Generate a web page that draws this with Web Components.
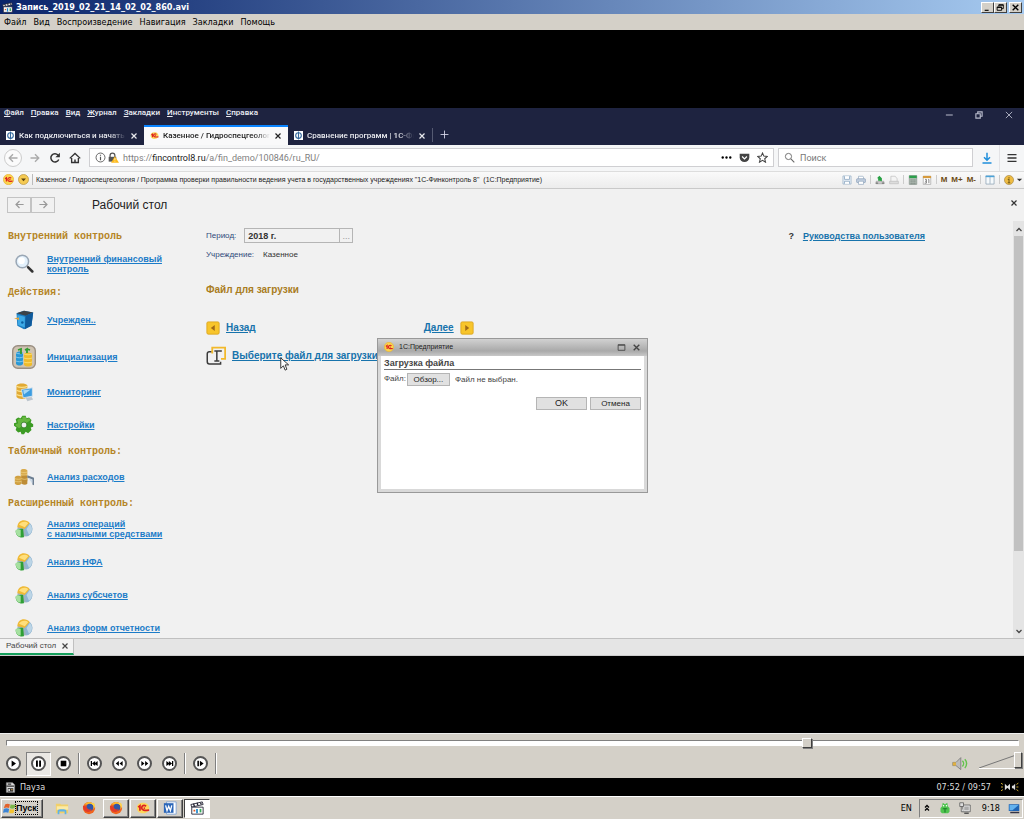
<!DOCTYPE html>
<html lang="ru">
<head>
<meta charset="utf-8">
<title>Запись_2019_02_21_14_02_02_860.avi</title>
<style>
html,body{margin:0;background:#000}
body{font-family:"DejaVu Sans Condensed","DejaVu Sans",sans-serif;font-size:9px;line-height:12px}
</style>
</head>
<body>
<player-window></player-window>
<script>
const ICONS = {
film:`<path d="M1 4 14 1l1 3L2 7z" fill="#fff" stroke="#223"/><path d="M4 3l1 3M8 2l1 3M12 2l1 2" stroke="#223" stroke-width="1.5"/><path d="M2 7h13v8H2z" fill="#fff" stroke="#223"/><path d="M4 10h2v2H4z" fill="#d52"/><path d="M7 9h2v5H7z" fill="#28c"/><path d="M11 9h2v4h-2z" fill="#3a5"/>`,
filmdoc:`<path d="M2 1h9l3 3v11H2z" fill="#ddd" stroke="#888"/><path d="M2 6h11M4 3h5" stroke="#333" stroke-width="2"/><path d="M4 9h8v5H4z" fill="#333"/><path d="M5 10h2v3H5z" fill="#fff"/><path d="M9 10h2v2H9z" fill="#c94"/>`,
min:`<path d="M3 12h7v2H3z"/>`,
restore:`<path d="M5 3h8v7h-3M5 3v3M5 4h8" fill="none" stroke="#000" stroke-width="1.6"/><path d="M2 7h8v6H2zM2 8h8" fill="none" stroke="#000" stroke-width="1.6"/>`,
x:`<path d="M3 3l10 10M13 3L3 13" fill="none" stroke="currentColor" stroke-width="2.4"/>`,
xthin:`<path d="M3 3l10 10M13 3L3 13" fill="none" stroke="currentColor" stroke-width="1.4"/>`,
line:`<path d="M3 8h11" stroke="currentColor" stroke-width="1.6"/>`,
wrest:`<path d="M3 6h7v7H3zM6 6V3h7v7h-3" fill="none" stroke="currentColor" stroke-width="1.8"/>`,
max:`<path d="M2 3h12v10H2zM2 4h12" fill="none" stroke="currentColor" stroke-width="1.5"/>`,
fi:`<path d="M0 0h16v16H0z" fill="#fff"/><circle cx="8" cy="8" r="5" fill="none" stroke="#34699e" stroke-width="2"/><path d="M8 1v14" stroke="#34699e" stroke-width="2"/>`,
onec:`<circle cx="8" cy="8" r="7.5" fill="#fbd44c" stroke="#e9b23a"/><path d="M3 7l2-1.500V11M12 6C10 4.500 7 5.500 7 8s2 3 7 2.500" fill="none" stroke="#d22" stroke-width="1.800"/><circle cx="10" cy="8" r="1" fill="#d22"/>`,
oneflat:`<path d="M1 8C1 3 5 2 8 2s6 1 7 5-3 7-7 7-7-2-7-6z" fill="#fcd75a"/><path d="M2.500 7l2-1.500V11M11.500 6C9 4 6.500 5.500 6.500 8s3 3 8.500 2.500" fill="none" stroke="#d22" stroke-width="2"/><circle cx="9.500" cy="8" r="1" fill="#d22"/>`,
drop:`<circle cx="8" cy="8" r="7.300" fill="#f5ca52" stroke="#b8923a"/><path d="M4.500 6.500h7L8 10.500z" fill="#5a4310"/>`,
left:`<path d="M14 8H3M8 3L3 8l5 5" fill="none" stroke="currentColor" stroke-width="1.8"/>`,
right:`<path d="M2 8h11M8 3l5 5-5 5" fill="none" stroke="currentColor" stroke-width="1.8"/>`,
reload:`<path d="M13 10A5.500 5.500 0 1 1 12 4" fill="none" stroke="#333" stroke-width="2"/><path d="M14.500 1v6h-6z" fill="#333"/>`,
home:`<path d="M1 8.500L8 2l7 6.500M3.500 8v6h9V8" fill="none" stroke="#333" stroke-width="1.8"/><path d="M7 10h2v4H7z" fill="#333"/>`,
info:`<circle cx="8" cy="8" r="6.500" fill="none" stroke="#555" stroke-width="1.3"/><path d="M8 7v5M8 4v1.600" stroke="#555" stroke-width="1.700"/>`,
lock:`<path d="M3 8V5a3.500 3.500 0 0 1 7 0v3" fill="none" stroke="#555" stroke-width="1.800"/><path d="M1 7h11v7H1z" fill="#555"/><path d="M10 6l6 9.500H4.500z" fill="#fcba1c"/><path d="M10 9v3M10 13v1" stroke="#fff"/>`,
dots:`<circle cx="2.500" cy="8" r="1.700"/><circle cx="8" cy="8" r="1.700"/><circle cx="13.500" cy="8" r="1.700"/>`,
pocket:`<path d="M1 2.500h14V8a7 6.500 0 0 1-14 0z" fill="#444"/><path d="M4.500 6.500L8 10l3.500-3.500" fill="none" stroke="#fff" stroke-width="1.800"/>`,
star:`<path d="M8 1.500l2 4.500 5 .5-3.800 3.300 1.200 5L8 12l-4.400 2.800 1.200-5L1 6.500 6 6z" fill="none" stroke="#444" stroke-width="1.500"/>`,
search:`<circle cx="6.500" cy="6.500" r="4.500" fill="none" stroke="#666" stroke-width="1.300"/><path d="M10 10l5 5" stroke="#666" stroke-width="1.600"/>`,
download:`<path d="M8 1v9M4 7l4 4 4-4M2 14.500h12" fill="none" stroke="#1f8fdc" stroke-width="2"/>`,
burger:`<path d="M2 3.500h12M2 8h12M2 12.500h12" stroke="#333" stroke-width="1.800"/>`,
plus:`<path d="M8 1v14M1 8h14" stroke="#dde" stroke-width="1.500"/>`,
save:`<path d="M1.500 1.500h13v13h-13z" fill="#e8f0f7" stroke="#8ba6c0"/><path d="M4 2v5h8V2M4 14v-4h8v4" fill="#fff" stroke="#8ba6c0" stroke-width="1.300"/>`,
print:`<path d="M4 6V2h7l1 1v3" fill="#fff" stroke="#8aa0b8"/><rect x="1" y="6" width="14" height="6" rx="1" fill="#c2cfdf" stroke="#7c94b0"/><path d="M4 10h8v5H4z" fill="#fff" stroke="#8aa0b8"/>`,
getf:`<path d="M2 10h12v4H2z" fill="#ccc" stroke="#999"/><path d="M1 13h4M11 13h4" stroke="#777" stroke-width="2"/><path d="M11 10V5L7 1 3 5h2v4h3z" fill="#27a043"/>`,
putf:`<path d="M3 2h7l3 4v5H3z" fill="#f4f4f4" stroke="#b8b8b8"/><path d="M1 10h14v4H1z" fill="#ddd" stroke="#bbb"/>`,
calc:`<path d="M2 1h12v14H2z" fill="#b4bfb8" stroke="#7c8a80"/><path d="M2 1h12v4H2z" fill="#2c9f4b"/><path d="M4 8h8M4 11h8M4 14h8" stroke="#6b776f" stroke-dasharray="2 1" stroke-width="1.500"/>`,
cal:`<path d="M2 2h12v13H2z" fill="#fff" stroke="#999"/><path d="M1.500 1.500h13v3.500h-13z" fill="#d69a3d"/><path d="M5 7h2v3H5M7 10v3H4M10 7h1v6" fill="none" stroke="#666" stroke-width="1.300"/>`,
panes:`<path d="M1.500 1.500h13v13h-13zM8 2v12" fill="#f6fafc" stroke="#7b93a8"/><path d="M1 1h14v2.500H1z" fill="#4ba3d8"/>`,
infog:`<circle cx="8" cy="8" r="7.300" fill="#eebc43" stroke="#a48441"/><path d="M8 7v5.500M6 7h2.500M6 12.500h4M8 3.500v2" stroke="#6b5212" stroke-width="1.500"/>`,
caret:`<path d="M2 6h12l-6 6z" fill="#333"/>`,
mag:`<circle cx="10" cy="9" r="7.500" fill="#e3f1fc" stroke="#9aa7b5" stroke-width="1.800"/><circle cx="9" cy="8" r="4" fill="#fff"/><path d="M15.500 14l2 2" stroke="#999" stroke-width="2"/><path d="M17 16l5 5" stroke="#333" stroke-width="3" stroke-linecap="round"/>`,
box:`<path d="M3 4l9-3 11 2-2 16-9 4-8-4z" fill="#1c7dc2"/><path d="M3 4l9-3 11 2-9 4z" fill="#3b4248"/><path d="M14 7l9-4-2 16-8 4z" fill="#0f5a9c"/><path d="M4 6l9 2v13l-8-3z" fill="#3ca9e6"/><path d="M0 10l6-1v3z" fill="#e2a13a"/><circle cx="10" cy="15" r="1.500" fill="#0b5ea0"/>`,
init:`<rect x=".7" y=".7" width="22.600" height="22.600" rx="5" fill="#cfc3b2" stroke="#9a8f82" stroke-width="1.400"/><path d="M4 8c2-2 5-2 7 0v11c-2 2-5 2-7 0z" fill="#2b98d4"/><path d="M4 8c2 1 5 1 7 0M4 12c2 1 5 1 7 0M4 16c2 1 5 1 7 0" stroke="#a8def6" stroke-width=".7" fill="none"/><path d="M12 9c2-2 6-2 8 0v11c-2 2-6 2-8 0z" fill="#eebb2c"/><path d="M12 9c2 1 6 1 8 0M12 13c2 1 6 1 8 0M12 17c2 1 6 1 8 0" stroke="#fdeb8c" stroke-width=".7" fill="none"/><path d="M9 9V4L6 5M15 8V4l-2 1M15 4l3 1" fill="none" stroke="#329b30" stroke-width="1.800"/>`,
monit:`<path d="M3 4c2-3 11-3 13 0v14c-2 3-11 3-13 0z" fill="#e1aa34"/><path d="M3 5c3 2 10 2 13 0M3 10c3 2 10 2 13 0M3 15c3 2 10 2 13 0" fill="none" stroke="#fbe08a" stroke-width="1.500"/><path d="M9 9l13-2v10l-11 2z" fill="#3b9ce0" stroke="#d8e4ee"/><path d="M11 10l9-1-8 6z" fill="#a6d8f6"/><path d="M14 19l7-1 2 3-7 2z" fill="#bcc5ce"/>`,
gear:`<path d="M10 1h4l1 3 3-1 3 3-1 3 3 2v3l-3 1 1 3-4 4-3-2-2 3h-3l-1-3-3 1-3-3 1-3-3-2v-3l3-1-1-4 3-2 3 1z" fill="#3c9b24"/><path d="M10 2h4l1 3 3-1 2 2-14 10-4-3v-2l3-1-1-4 3-2 3 1z" fill="#70bd47" opacity=".8"/><circle cx="12" cy="12" r="3.500" fill="#efefef" stroke="#2b7a1b"/>`,
expen:`<path d="M8 4c1-2 6-2 8 0v13H8z" fill="#d9ab4d"/><path d="M1 12c2-2 6-2 8 0v8c-2 2-6 2-8 0z" fill="#d0a042"/><path d="M9 11c2-2 5-2 7 0v9c-2 2-5 1-7 0z" fill="#be8d36"/><path d="M8 6c3 1 5 1 8 0M8 9c3 1 5 1 8 0M1 14c3 1 6 1 8 0M1 17c3 1 6 1 8 0M9 14c3 1 5 1 7 0" stroke="#f0d488" stroke-width=".8" fill="none"/><path d="M16 10l8 3v9l-2-1v-6l-6-2z" fill="#6d7f92"/><path d="M17 13l5 2v5z" fill="#ccdae7"/>`,
pie:`<circle cx="13" cy="12" r="9" fill="#9fb3c2"/><path d="M13 12L4 10C4 1 14-1 19 5z" fill="#efb935"/><path d="M6 7c2-4 8-5 11-2l-4 5z" fill="#ffdf7c"/><path d="M13 12l6-7c5 4 4 14-4 16z" fill="#8fb6d3"/><path d="M19 6c4 4 3 10-1 13l-3-7z" fill="#bcd5e6"/><path d="M2 14c2-2 6-3 9-2l1 10c-6 1-10-2-10-8z" fill="#2f9f35"/><path d="M2 14c1-2 4-2 6-1v8c-4 0-6-3-6-7z" fill="#a5e0a0"/>`,
goleft:`<rect x="1" y="1" width="14" height="14" rx="1.500" fill="#f8c52b" stroke="#dca51e"/><path d="M10 4.500v7L5.500 8z" fill="#a06a18"/>`,
goright:`<rect x="1" y="1" width="14" height="14" rx="1.500" fill="#f8c52b" stroke="#dca51e"/><path d="M6 4.500v7L10.500 8z" fill="#a06a18"/>`,
choose:`<path d="M7 7H4c-2 0-2.500 1-2.500 2.500v9c0 2 1 3 2.500 3h13.500V19" fill="none" stroke="#3c3c3c" stroke-width="1.800"/><path d="M7.500 9V2H23v13.500h-5" fill="none" stroke="#f2b92b" stroke-width="2.200"/><path d="M10 6h9M13 6v12M10 18h6" fill="none" stroke="#3c3c3c" stroke-width="1.800"/>`,
play:`<path d="M9 7l7 5-7 5z"/>`, pause:`<path d="M8 7h3v10H8zM13 7h3v10h-3z"/>`, stop:`<path d="M7.500 7.500h9v9h-9z"/>`,
prev:`<path d="M6 8h2v8H6zM17 8v8l-4-3v3l-5-4 5-4v3z"/>`, rew:`<path d="M11 8v8l-5-4zM17 8v8l-5-4z"/>`,
ff:`<path d="M7 8v8l5-4zM13 8v8l5-4z"/>`, next:`<path d="M16 8h2v8h-2zM7 8v8l4-3v3l5-4-5-4v3z"/>`, step:`<path d="M7 7.500h2.500v9H7zM11 7.500v9l6-4.500z"/>`,
speaker:`<path d="M1 8h4l6-6v15l-6-5H1z" fill="#bbb" stroke="#777"/><path d="M1 8h4v4H1z" fill="#e0b040"/><path d="M13 6c2 2 2 5 0 7M16 4c3 3 3 8 0 11" fill="none" stroke="#62c34c" stroke-width="1.800"/>`,
ramp:`<path d="M1 17L41 3" fill="none" stroke="#777"/><path d="M1 17.500h40" stroke="#fff"/>`,
stereo:`<path d="M6 4l4 4 4-4v10l-4-4-4 4zM22 4v10l-3-3h-2V7h2z" fill="#ddd"/><path d="M0 3l3 2M0 9h3M0 15l3-2M27 3l-3 2M27 9h-3M27 15l-3-2" stroke="#d0ac30" stroke-width="1.500"/>`,
flag:`<path d="M3 3c2-1 4-1 6 0L8 8C6 7 4 7 1 8z" fill="#e2622b"/><path d="M10 3c2 1 4 1 7 0l-2 5c-2 1-4 1-6 0z" fill="#7ab648"/><path d="M1 9c2-1 5-1 7 0l-1 5c-2-1-4-1-7 0z" fill="#3c84d4"/><path d="M9 9c2 1 4 1 6 0l-1 5c-2 1-4 1-6 0z" fill="#f5c330"/>`,
folder:`<path d="M1 3h5l1 1h8v10H1z" fill="#f1d06a"/><path d="M2 6h13v4H2z" fill="#fbeaa6"/><path d="M3 15v-4c0-2 10-2 10 0v4h-2v-3H5v3z" fill="#5fb2e6"/>`,
fox:`<circle cx="8" cy="8" r="7" fill="#f0641e"/><path d="M2 4c1 0 3-3 7-3 4 1 6 4 6 7-1-2-3-4-5-4z" fill="#fdbb2d"/><circle cx="9" cy="7" r="4" fill="#3157a8"/><path d="M1 6c2-1 4 0 5 2s3 2 5 1c-1 4-6 5-9 1z" fill="#e23b2a"/><path d="M9 3c3 0 5 2 4 6 3-2 2-6 0-7z" fill="#fdd34c"/>`,
word:`<path d="M4 1h11v14H4z" fill="#fff" stroke="#7fa3d3"/><path d="M1 2.500h11v11H1z" fill="#2b66b8"/><path d="M3 5l1.600 6L6.500 6l2 5L10 5" fill="none" stroke="#fff" stroke-width="1.500"/>`,
chev:`<path d="M4 7l4-4 4 4M4 13l4-4 4 4" fill="none" stroke="#000" stroke-width="2.500"/>`,
bug:`<path d="M5 1l3 2 3-2 1 5 2 2v5l-2 2H4l-2-2V8l2-2z" fill="#4fc44f"/><circle cx="6" cy="5" r="1" fill="#fff"/><circle cx="10" cy="5" r="1" fill="#fff"/><path d="M5 9h6M8 8v6" stroke="#1f7f2a" stroke-width="1.500"/>`,
net:`<path d="M5 4h10v9H5z" fill="#e4e4e4" stroke="#555"/><path d="M7 6h6v5H7z" fill="#aaa"/><path d="M7 15h6" stroke="#555" stroke-width="2"/><path d="M1 1h5v5H1zM3 6v7h3" fill="#ddd" stroke="#555"/>`,
desk:`<path d="M1 3h14v9H1z" fill="#1f64b4"/><path d="M2 4h12L6 11H2z" fill="#63b2ee"/><path d="M3 14h12" stroke="#334" stroke-width="2"/>`,
up:`<path d="M3 10l5-5 5 5" fill="none" stroke="#444" stroke-width="2.500"/>`,
down:`<path d="M3 6l5 5 5-5" fill="none" stroke="#444" stroke-width="2.500"/>`,
cursor:`<path d="M2 1v12l3-3 2 5 2-1-2-5h4z" fill="#fff" stroke="#222"/>`
};
const BOX = {mag:24,box:24,init:24,monit:24,gear:24,expen:24,pie:24,choose:24,play:24,pause:24,stop:24,prev:24,rew:24,ff:24,next:24,step:24,speaker:20,flag:17};
const WIDE = {ramp:"0 0 42 18",stereo:"0 0 28 18"};

customElements.define("ui-icon", class extends HTMLElement {
  connectedCallback(){
    const n = this.getAttribute("name"), b = BOX[n] || 16;
    this.attachShadow({mode:"open"}).innerHTML =
      `<style>:host{display:block;flex:none;width:var(--s,11px);height:var(--s,11px)}svg{display:block;width:100%;height:100%}</style>
       <svg viewBox="${WIDE[n] || `0 0 ${b} ${b}`}" aria-hidden="true">${ICONS[n]}</svg>`;
  }
});

const RESET = `*{box-sizing:border-box}button,input{font:inherit;color:inherit;margin:0;padding:0;border:0;background:none;border-radius:0}a{color:inherit}`;
function define(name, css, html){
  customElements.define(name, class extends HTMLElement {
    connectedCallback(){
      if (this.shadowRoot) return;
      const body = typeof html === "function" ? html(this) : html;
      const t = document.createElement("template");
      t.innerHTML = `<style>${RESET}${css}</style>${body}`;
      this.attachShadow({mode:"open"}).append(t.content.cloneNode(true));
    }
  });
}

define("title-bar", `:host{display:flex;align-items:center;height:14px;padding:0 2px 0 2px;gap:3px;background:linear-gradient(90deg,#0a246a,#a6caf0);color:#fff;font-weight:bold;font-size:9px}
h1{font:inherit;margin:0;flex:1;white-space:nowrap}
.g{display:flex}button{width:13px;height:11px;background:#d4d0c8;color:#000;border:1px solid;border-color:#fff #404040 #404040 #fff;display:grid;place-items:center;--s:9px}button:last-child{margin-left:2px}`,
`<ui-icon name="film"></ui-icon><h1>Запись_2019_02_21_14_02_02_860.avi</h1>
<div class="g"><button aria-label="Свернуть"><ui-icon name="min"></ui-icon></button><button aria-label="Восстановить"><ui-icon name="restore"></ui-icon></button><button aria-label="Закрыть"><ui-icon name="x"></ui-icon></button></div>`);

define("player-menu", `:host{display:flex;align-items:center;height:16px;padding:0 4px;gap:7px;background:#d4d0c8;color:#000}`,
["Файл","Вид","Воспроизведение","Навигация","Закладки","Помощь"].map(t=>`<button>${t}</button>`).join(""));

define("browser-tab", `:host{display:flex;align-items:center;flex:0 1 144px;min-width:0;height:20px;padding:0 6px;gap:4px;color:#e8e9ee;--s:9px;border-top:2px solid transparent}
:host([active]){background:#f9f9fa;color:#222;border-top-color:#0a84ff}
.t{flex:1;min-width:0;overflow:hidden;white-space:nowrap;mask-image:linear-gradient(90deg,#000 85%,transparent)}
button{--s:8px}`,
h=>`<ui-icon name="${h.getAttribute("icon")}"></ui-icon><span class="t"><slot></slot></span><button aria-label="Закрыть вкладку"><ui-icon name="x"></ui-icon></button>`);

define("browser-chrome", `:host{display:block;background:#1e2340;color:#eceef4;font-family:Roboto,sans-serif;font-size:8px;font-weight:500}
.m{display:flex;align-items:center;height:17px;padding:0 10px 6px 4px;gap:7px}.m .sp{flex:1}
.m button::first-letter{text-decoration:underline}.w{display:flex;gap:20px;--s:10px;color:#b9bccb;padding-top:4px}
.tabs{display:flex;align-items:center}.new{width:24px;height:14px;border-left:1px solid #555a72;display:grid;place-items:center;--s:9px}
.nav{display:flex;align-items:center;height:26px;background:#f5f6f7;color:#333;padding:0 6px 0 4px;gap:8px;font-weight:400;font-size:9px}
.nav>button{display:grid;place-items:center;--s:12px}.nav .b{width:18px;height:18px;border:1px solid #ccc;border-radius:50%;color:#aaa;margin-right:-1px;background:#fbfbfb}.f{color:#aaa}
.u,.s{display:flex;align-items:center;height:19px;background:#fff;border:1px solid #cfcfd2;padding:0 5px}
.u{flex:673;min-width:0;gap:2px;--s:11px}.u .a{flex:1;margin-left:2px;white-space:nowrap;color:#808080}.u .a b{color:#222;font-weight:400}.u .e{display:flex;gap:7px}
.s{flex:183;min-width:0;gap:5px;margin-left:-4px}.s input{flex:1;min-width:0;outline:0}.s input::placeholder{color:#777;opacity:1}
.nav>.h{border-left:1px solid #e3e3e6;padding-left:6px;height:26px;margin-left:-2px}`,
`<div class="m">${["Файл","Правка","Вид","Журнал","Закладки","Инструменты","Справка"].map(t=>`<button>${t}</button>`).join("")}<span class="sp"></span>
<div class="w"><ui-icon name="line"></ui-icon><ui-icon name="wrest"></ui-icon><ui-icon name="xthin"></ui-icon></div></div>
<div class="tabs"><browser-tab icon="fi">Как подключиться и начать р</browser-tab><browser-tab icon="oneflat" active>Казенное / Гидроспецгеологи</browser-tab><browser-tab icon="fi">Сравнение программ | 1С-Фи</browser-tab><button class="new" aria-label="Новая вкладка"><ui-icon name="plus"></ui-icon></button></div>
<div class="nav"><button class="b" aria-label="Назад"><ui-icon name="left"></ui-icon></button><button class="f" aria-label="Вперёд"><ui-icon name="right"></ui-icon></button><button aria-label="Обновить"><ui-icon name="reload"></ui-icon></button><button aria-label="Домой"><ui-icon name="home"></ui-icon></button>
<div class="u"><ui-icon name="info"></ui-icon><ui-icon name="lock"></ui-icon><span class="a">https://<b>fincontrol8.ru</b>/a/fin_demo/100846/ru_RU/</span><span class="e"><ui-icon name="dots"></ui-icon><ui-icon name="pocket"></ui-icon><ui-icon name="star"></ui-icon></span></div>
<div class="s"><ui-icon name="search"></ui-icon><input aria-label="Поиск" placeholder="Поиск"></div>
<button aria-label="Загрузки"><ui-icon name="download"></ui-icon></button><button class="h" aria-label="Меню"><ui-icon name="burger"></ui-icon></button></div>`);

define("app-bar", `:host{display:flex;align-items:center;height:18px;padding:0 1px 0 3px;background:linear-gradient(#fafafa,#ececec);border-bottom:1px solid #c9c9c9;border-top:1px solid #ddd;color:#222;font:7px/12px "Liberation Sans",sans-serif;--s:11px}
.l{display:flex;gap:4px;padding-right:3px;border-right:1px solid #bbb;margin-right:3px}.c{flex:1;min-width:0;white-space:pre;overflow:hidden}
.r{display:flex;gap:4px;align-items:center;--s:10px}.r b{font-size:8px;color:#6b4a12}i{width:1px;height:9px;background:#ccc}.k{--s:7px;margin-left:-2px}`,
`<div class="l"><ui-icon name="onec"></ui-icon><ui-icon name="drop"></ui-icon></div><span class="c">Казенное / Гидроспецгеология / Программа проверки правильности ведения учета в государственных учреждениях "1С-Финконтроль 8"  (1С:Предприятие)</span>
<div class="r"><ui-icon name="save"></ui-icon><ui-icon name="print"></ui-icon><i></i><ui-icon name="getf"></ui-icon><ui-icon name="putf"></ui-icon><i></i><ui-icon name="calc"></ui-icon><ui-icon name="cal"></ui-icon><i></i><b>M</b><b>M+</b><b>M-</b><i></i><ui-icon name="panes"></ui-icon><i></i><ui-icon name="infog"></ui-icon><ui-icon class="k" name="caret"></ui-icon></div>`);

define("side-group", `:host{display:block;margin-bottom:1px}h2{margin:0;padding-left:8px;height:18px;font:bold 10px/18px "Liberation Mono",monospace;color:#b58526;white-space:nowrap}`,
h=>`<h2>${h.getAttribute("label")}</h2><slot></slot>`);

define("side-link", `:host{display:grid;grid-template-columns:24px 1fr;column-gap:11px;align-items:center;padding-left:12px;height:33px;color:#1c7cc8;--s:20px}
:host([tall]){height:37px}:host([boxed]){--s:24px}ui-icon{justify-self:center}
a{font:bold 9px/10px "Liberation Sans",sans-serif;white-space:nowrap;justify-self:start}`,
h=>`<ui-icon name="${h.getAttribute("icon")}"></ui-icon><a href="#"><slot></slot></a>`);

define("upload-dialog", `:host{display:flex;flex-direction:column;width:271px;height:155px;background:#d9d9d9;border:1px solid #999;padding:0 3px 3px;color:#444;font:8px/12px "Liberation Sans",sans-serif}
header{display:flex;align-items:center;height:17px;margin:0 -3px;padding:0 6px;gap:5px;background:linear-gradient(#d2d2d2,#a9a9a9 70%,#c8c8c8);color:#222;font-size:7px;--s:10px}
header span{flex:1}header button{--s:9px;margin-left:1px;color:#444}
main{flex:1;background:#fff;padding:2px 3px}
h2{margin:0 0 3px;font:bold 9px/11px "Liberation Sans",sans-serif;border-bottom:1px solid #777;color:#444}
.f{display:flex;align-items:flex-start}.f button{margin:0 5px 0 1px;width:43px}.f span{line-height:14px}label{line-height:11px}
.b{display:flex;justify-content:flex-end;gap:3px;margin-top:10px}.b button{width:51px}
main button{height:13px;background:#e1e1e1;border:1px solid #b5b5b5;color:#222;font-size:9px;line-height:11px}.f button,.b button:last-child{font-size:8px}`,
`<header><ui-icon name="onec"></ui-icon><span>1С:Предприятие</span><button aria-label="Развернуть"><ui-icon name="max"></ui-icon></button><button aria-label="Закрыть"><ui-icon name="x"></ui-icon></button></header>
<main><h2>Загрузка файла</h2><div class="f"><label for="pick">Файл:</label><button id="pick">Обзор...</button><span>Файл не выбран.</span></div><div class="b"><button>OK</button><button>Отмена</button></div></main>`);

define("app-content", `:host{display:flex;flex-direction:column;flex:1;min-height:0;background:#f1f1f1;color:#333;font:9px/12px "Liberation Sans",sans-serif}
.top{display:flex;align-items:center;height:32px;padding:0 6px 0 7px}.nb{display:flex;color:#999;--s:11px}.nb button{width:24px;height:16px;border:1px solid #c3c3c3;display:grid;place-items:center}.nb button+button{margin-left:0}
h1{margin:0 0 0 37px;flex:1;font:12px/16px "Liberation Sans",sans-serif;color:#222}.top>button{--s:8px;margin-bottom:4px}
.body{flex:1;min-height:0;display:grid;grid-template-columns:206px minmax(0,1fr) 11px}
nav{padding-top:7px;overflow:hidden}.work{padding-top:7px;overflow:hidden}
.row{display:flex;align-items:center}.p{height:16px}.p label,.o span:first-child{color:#2f4a7a}.fld{display:flex;margin-left:8px;width:109px;height:15px;border:1px solid #b5b5b5;font-weight:bold}.fld input{flex:1;min-width:0;padding-left:3px}.fld button{width:13px;border-left:1px solid #b5b5b5;color:#999;line-height:8px;font-weight:400}
.q{margin-left:auto;margin-right:88px;display:flex;gap:9px;font-weight:bold}.q a,.go a{color:#1773ac}
.o{height:22px;gap:9px;font-size:8px}.p label{font-size:8px}
h2{margin:17px 0 21px;font:bold 10px/14px "Liberation Sans",sans-serif;color:#a97c22}
.go{font:bold 10px/14px "Liberation Sans",sans-serif;--s:14px;height:20px;gap:6px;white-space:nowrap}.go .n{margin-left:162px}
.ch{height:22px;margin-top:7px;--s:20px}
.sb{background:#e4e4e4;display:flex;flex-direction:column;align-items:center;--s:8px;padding:5px 0 3px}.th{width:9px;flex:320;background:#c1c1c1;margin-top:2px}.rest{flex:76}
.tabs{height:18px;display:flex;background:#e5e5e5;border-top:1px solid #c0c0c0;border-bottom:1px solid #ccc}
.tab{display:flex;align-items:center;gap:5px;padding:0 4px 0 6px;background:#f3f3f3;border-right:1px solid #c0c0c0;border-bottom:2px solid #15a05c;--s:8px;color:#444;font-size:8px}`,
`<div class="top"><div class="nb"><button aria-label="Назад"><ui-icon name="left"></ui-icon></button><button aria-label="Вперёд"><ui-icon name="right"></ui-icon></button></div><h1>Рабочий стол</h1><button aria-label="Закрыть"><ui-icon name="x"></ui-icon></button></div>
<div class="body"><nav>
<side-group label="Внутренний контроль"><side-link tall icon="mag">Внутренний финансовый<br>контроль</side-link></side-group>
<side-group label="Действия:"><side-link tall icon="box">Учрежден..</side-link><side-link tall boxed icon="init">Инициализация</side-link><side-link icon="monit">Мониторинг</side-link><side-link icon="gear">Настройки</side-link></side-group>
<side-group label="Табличный контроль:"><side-link icon="expen">Анализ расходов</side-link></side-group>
<side-group label="Расширенный контроль:"><side-link icon="pie">Анализ операций<br>с наличными средствами</side-link><side-link icon="pie">Анализ НФА</side-link><side-link icon="pie">Анализ субсчетов</side-link><side-link icon="pie">Анализ форм отчетности</side-link></side-group>
</nav><div class="work">
<div class="row p"><label for="per">Период:</label><span class="fld"><input id="per" value="2018 г."><button aria-label="Выбрать период">...</button></span><span class="q">?<a href="#">Руководства пользователя</a></span></div>
<div class="row o"><span>Учреждение:</span><span>Казенное</span></div>
<h2>Файл для загрузки</h2>
<div class="row go"><ui-icon name="goleft"></ui-icon><a href="#">Назад</a><a class="n" href="#">Далее</a><ui-icon name="goright"></ui-icon></div>
<div class="row go ch"><ui-icon name="choose"></ui-icon><a href="#">Выберите файл для загрузки</a></div>
</div><div class="sb"><ui-icon name="up"></ui-icon><div class="th"></div><div class="rest"></div><ui-icon name="down"></ui-icon></div></div>
<div class="tabs"><div class="tab">Рабочий стол<button aria-label="Закрыть"><ui-icon name="x"></ui-icon></button></div></div>`);

define("screen-recording", `:host{display:flex;flex:1;align-items:center;background:#000}
.v{position:relative;display:flex;flex-direction:column;width:100%;aspect-ratio:1024/548;overflow:hidden}
upload-dialog{position:absolute;left:calc(50% - 135px);top:42%}
.cur{position:absolute;left:27%;top:45%;margin:3px;--s:14px}`,
`<div class="v"><browser-chrome></browser-chrome><app-bar></app-bar><app-content></app-content><ui-icon class="cur" name="cursor"></ui-icon><upload-dialog></upload-dialog></div>`);

define("player-controls", `:host{display:block;background:#d4d0c8;border-top:1px solid #eee}
.seek{display:block;width:calc(100% - 11px);height:13px;margin:2px 5px 0 6px;appearance:none}
.seek::-webkit-slider-runnable-track{height:6px;background:#fff;border:1px solid;border-color:#808080 #fff #fff #808080}
input::-webkit-slider-thumb{appearance:none;background:#d4d0c8;border:1px solid;border-color:#fff #404040 #404040 #fff;box-shadow:1px 1px #808080}
.seek::-webkit-slider-thumb{width:10px;height:10px;margin-top:-3px}
.r{display:flex;align-items:center;height:29px;padding:0 2px 0 1px;--s:15px}
.r button{width:25px;height:24px;display:grid;place-items:center}.r button span{display:grid;place-content:center;width:15px;height:15px;border:2px solid #555;border-radius:50%;background:#fff}
.on{background:#eae8e4;border:1px solid;border-color:#808080 #fff #fff #808080}.r button ui-icon{margin:-2px}
i{width:2px;height:21px;border-left:1px solid #808080;border-right:1px solid #fff;margin:0 2px}.sp{flex:1}
.sk{--s:16px}.vol{display:grid;width:44px;height:18px;margin:2px 0 0 10px;align-self:flex-start}.vol>*{grid-area:1/1}.vol ui-icon{width:42px;height:18px}
.vol input{appearance:none;width:44px;height:18px}.vol input::-webkit-slider-thumb{width:8px;height:16px}
.st{display:flex;align-items:center;height:18px;padding:0 5px;gap:4px;background:#000;color:#ddd;--s:11px}.st .w{flex:1}.st .e{width:18px;height:12px;margin-left:6px}`,
`<input class="seek" type="range" aria-label="Позиция" min="0" max="597" value="474">
<div class="r">${[["play","Воспроизвести"],["pause","Пауза"],["stop","Стоп"],0,["prev","Предыдущий"],["rew","Назад"],["ff","Вперёд"],["next","Следующий"],0,["step","Кадр"],0].map(a=>a?`<button aria-label="${a[1]}"${a[0]==="pause"?' class="on"':""}><span><ui-icon name="${a[0]}"></ui-icon></span></button>`:"<i></i>").join("")}<span class="sp"></span><ui-icon class="sk" name="speaker"></ui-icon><div class="vol"><ui-icon name="ramp"></ui-icon><input type="range" aria-label="Громкость" value="100"></div></div>
<div class="st"><ui-icon name="filmdoc"></ui-icon><span class="w">Пауза</span><span>07:52 / 09:57</span><ui-icon class="e" name="stereo"></ui-icon></div>`);

define("task-bar", `:host{display:flex;align-items:center;height:23px;padding:0 1px;background:#d4d0c8;border-top:1px solid #fff;--s:14px;color:#000}
button{display:grid;place-items:center;width:26px;height:19px;margin-right:1px}
.up{border:1px solid;border-color:#fff #404040 #404040 #fff;box-shadow:inset -1px -1px #808080}
.on{border:1px solid;border-color:#404040 #fff #fff #404040;background:#fff}
.start{display:flex;align-items:center;width:42px;font:bold 9px/12px "Liberation Sans",sans-serif;margin-right:6px;padding-left:1px}.start span{outline:1px dotted #000}.start ui-icon{--s:13px}
.sp{flex:1}.tray{display:flex;align-items:center;gap:8px;height:19px;margin-left:7px;padding:0 2px 0 3px;border:1px solid;border-color:#808080 #fff #fff #808080;--s:12px}.tray span{margin-left:3px}.ch{--s:8px}`,
`<button class="up start"><ui-icon name="flag"></ui-icon><span>Пуск</span></button>${["folder","fox","fox","onec","word","film"].map((n,i)=>`<button aria-label="${["Проводник","Firefox","Окно Firefox","1С:Предприятие","Word","Проигрыватель"][i]}" class="${i<2?"":i<5?"up":"on"}"><ui-icon name="${n==="onec"?"oneflat":n}"></ui-icon></button>`).join("")}<span class="sp"></span>EN<div class="tray"><ui-icon class="ch" name="chev"></ui-icon><ui-icon name="bug"></ui-icon><ui-icon name="net"></ui-icon><span>9:18</span><ui-icon name="desk"></ui-icon></div>`);

define("player-window", `:host{display:flex;flex-direction:column;min-height:100vh}`,
`<title-bar></title-bar><player-menu></player-menu><screen-recording></screen-recording><player-controls></player-controls><task-bar></task-bar>`);
</script>
</body>
</html>
